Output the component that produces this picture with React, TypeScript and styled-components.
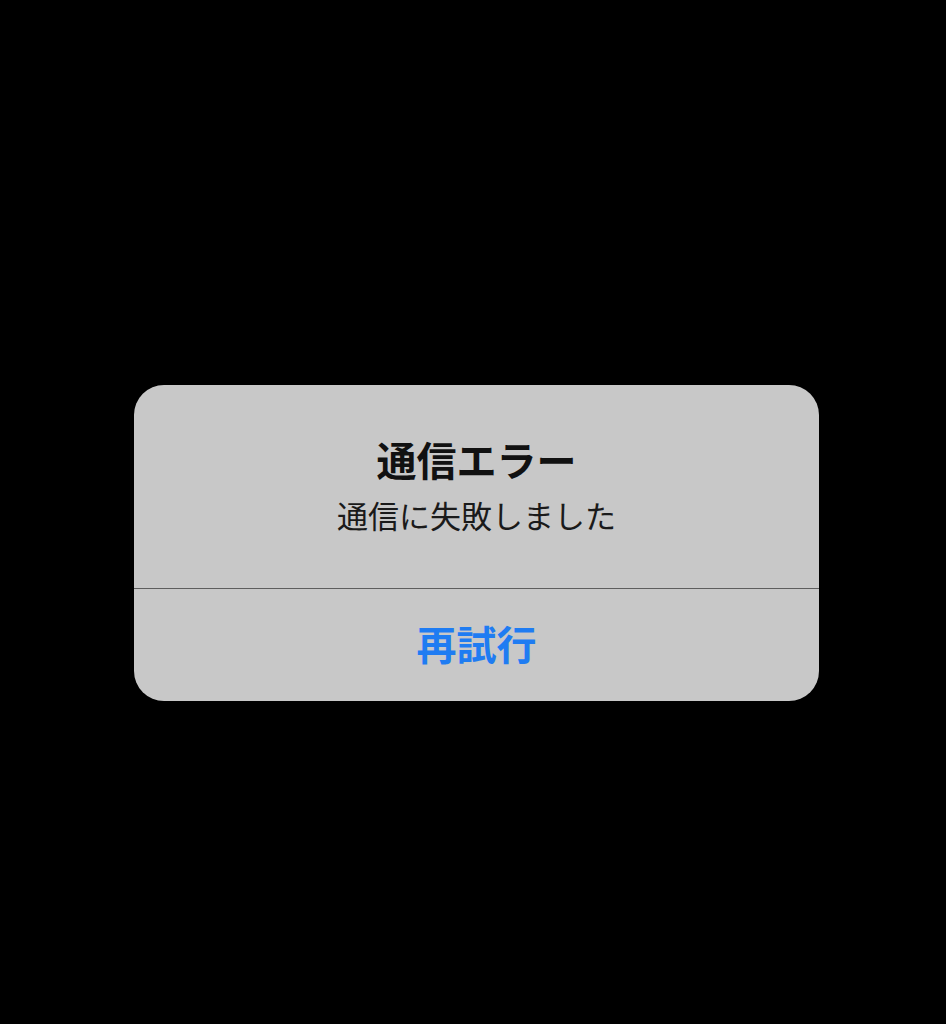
import styled, { createGlobalStyle } from 'styled-components';

const GlobalStyle = createGlobalStyle`
  html, body {
    margin: 0;
    padding: 0;
    background: #000;
  }
  body {
    font-family: "Noto Sans CJK JP", "Noto Sans", sans-serif;
  }
`

const SScreen = styled.div`
  box-sizing: border-box;
  width: 100%;
  height: 1024px;
  display: flex;
  align-items: center;
  justify-content: center;
  padding: 62px 0 0 7px;
`

const SAlert = styled.div`
  width: 685px;
  height: 316px;
  background: #c8c8c8;
  border-radius: 30px;
  display: flex;
  flex-direction: column;
  overflow: hidden;
`

const SBody = styled.div`
  height: 204px;
  box-sizing: border-box;
  padding-top: 51px;
  display: flex;
  flex-direction: column;
  align-items: center;
  border-bottom: 1px solid #5e5e5e;
`

const STitle = styled.h1`
  margin: 0;
  font-size: 40px;
  line-height: 46px;
  font-weight: 700;
  color: #111;
`

const SMessage = styled.p`
  margin: 13px 0 0;
  font-size: 31px;
  line-height: 40px;
  font-weight: 400;
  color: #1a1a1a;
`

const SButton = styled.button`
  flex: 1;
  border: none;
  background: transparent;
  font-family: inherit;
  font-size: 40px;
  font-weight: 700;
  color: #1f7cf2;
  padding: 0 0 4px;
  cursor: pointer;
`

export default function App() {
  return (
    <>
      <GlobalStyle />
      <SScreen>
        <SAlert>
          <SBody>
            <STitle>通信エラー</STitle>
            <SMessage>通信に失敗しました</SMessage>
          </SBody>
          <SButton>再試行</SButton>
        </SAlert>
      </SScreen>
    </>
  )
}
